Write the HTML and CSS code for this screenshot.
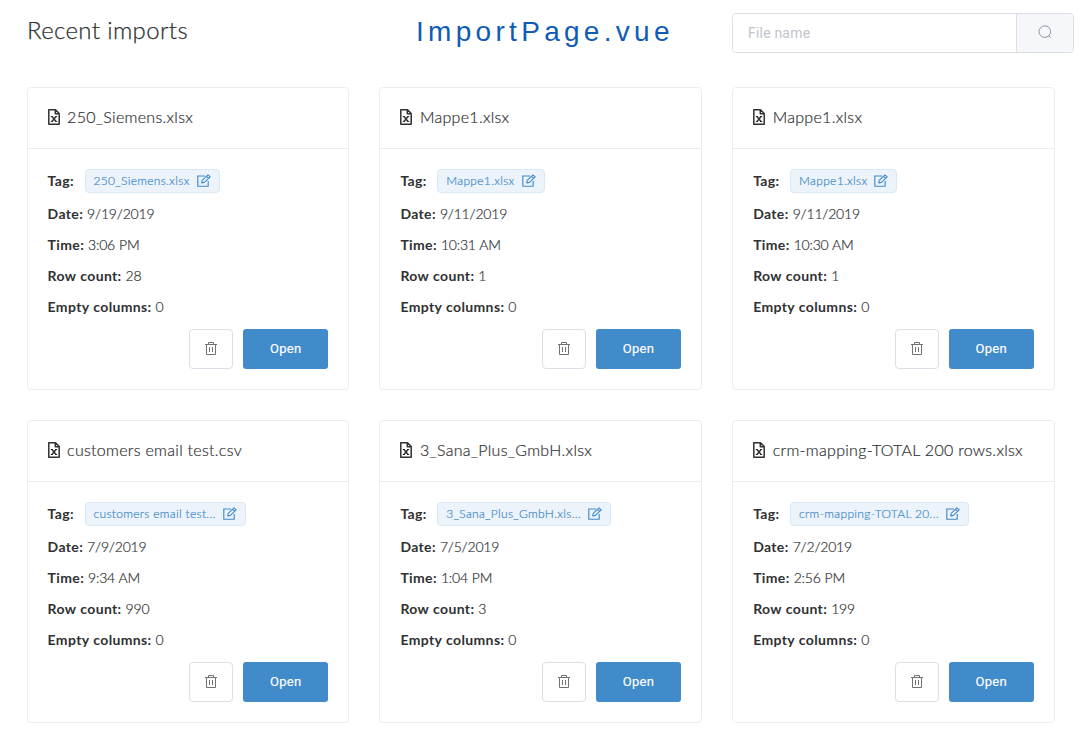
FILE: index.html
```html
<!DOCTYPE html>
<html lang="en">
<head>
<meta charset="utf-8">
<title>Recent imports</title>
<link rel="stylesheet" href="styles.css">
</head>
<body>
<svg class="sprite" aria-hidden="true">
  <symbol id="file" viewBox="0 0 12 16"><path d="M.8.8h6.7l3.7 3.7v10.7H.8zM7.3.8v4h3.9" fill="none" stroke="currentColor" stroke-width="1.5" stroke-linejoin="round"/><path d="M4 7.5l4 5M8 7.5l-4 5" fill="none" stroke="currentColor" stroke-width="1.5"/><path d="M2.8 7.5h2.2M7 7.5h2.2M2.8 12.5h2.2M7 12.5h2.2" stroke="currentColor"/></symbol>
  <symbol id="edit" viewBox="0 0 14 13"><path d="M8 2H.8v10.2h10.4V7" fill="none" stroke="currentColor" stroke-width="1.15"/><path d="M4.7 8.9l.5-2.6L11 .8l2.2 2-5.8 5.6zM9.4 2.2l2.2 2.1" fill="none" stroke="currentColor" stroke-width="1.1" stroke-linejoin="round"/></symbol>
  <symbol id="trash" viewBox="0 0 12 13"><path d="M0 2.5h12M3.5 2.5v-2h5v2M1.5 2.5v10h9v-10M4.5 5v5M7.5 5v5" fill="none" stroke="currentColor"/></symbol>
  <symbol id="search" viewBox="0 0 14 14"><circle cx="6.8" cy="6.6" r="5.8" fill="none" stroke="currentColor"/><path d="M10.6 10.6l2.2 2" stroke="currentColor"/></symbol>
</svg>
<header class="topbar">
  <h1 class="heading">Recent imports</h1>
  <div class="component">ImportPage.vue</div>
  <div class="search">
    <input class="search-input" type="text" placeholder="File name">
    <button class="search-button" aria-label="Search"><svg class="icon-search"><use href="#search"/></svg></button>
  </div>
</header>
<main class="cards">
  <article class="card">
    <h2 class="card-title"><svg class="icon-file"><use href="#file"/></svg><span class="file-name">250_Siemens.xlsx</span></h2>
    <div class="card-body">
      <div class="row tag-row"><b>Tag:</b><span class="tag"><span class="tag-text">250_Siemens.xlsx</span><svg class="icon-edit"><use href="#edit"/></svg></span></div>
      <div class="row"><b>Date:</b> 9/19/2019</div>
      <div class="row"><b>Time:</b> 3:06 PM</div>
      <div class="row"><b>Row count:</b> 28</div>
      <div class="row"><b>Empty columns:</b> 0</div>
      <div class="actions"><button class="delete" aria-label="Delete"><svg class="icon-trash"><use href="#trash"/></svg></button><button class="open">Open</button></div>
    </div>
  </article>
  <article class="card">
    <h2 class="card-title"><svg class="icon-file"><use href="#file"/></svg><span class="file-name">Mappe1.xlsx</span></h2>
    <div class="card-body">
      <div class="row tag-row"><b>Tag:</b><span class="tag"><span class="tag-text">Mappe1.xlsx</span><svg class="icon-edit"><use href="#edit"/></svg></span></div>
      <div class="row"><b>Date:</b> 9/11/2019</div>
      <div class="row"><b>Time:</b> 10:31 AM</div>
      <div class="row"><b>Row count:</b> 1</div>
      <div class="row"><b>Empty columns:</b> 0</div>
      <div class="actions"><button class="delete" aria-label="Delete"><svg class="icon-trash"><use href="#trash"/></svg></button><button class="open">Open</button></div>
    </div>
  </article>
  <article class="card">
    <h2 class="card-title"><svg class="icon-file"><use href="#file"/></svg><span class="file-name">Mappe1.xlsx</span></h2>
    <div class="card-body">
      <div class="row tag-row"><b>Tag:</b><span class="tag"><span class="tag-text">Mappe1.xlsx</span><svg class="icon-edit"><use href="#edit"/></svg></span></div>
      <div class="row"><b>Date:</b> 9/11/2019</div>
      <div class="row"><b>Time:</b> 10:30 AM</div>
      <div class="row"><b>Row count:</b> 1</div>
      <div class="row"><b>Empty columns:</b> 0</div>
      <div class="actions"><button class="delete" aria-label="Delete"><svg class="icon-trash"><use href="#trash"/></svg></button><button class="open">Open</button></div>
    </div>
  </article>
  <article class="card">
    <h2 class="card-title"><svg class="icon-file"><use href="#file"/></svg><span class="file-name">customers email test.csv</span></h2>
    <div class="card-body">
      <div class="row tag-row"><b>Tag:</b><span class="tag"><span class="tag-text">customers email test...</span><svg class="icon-edit"><use href="#edit"/></svg></span></div>
      <div class="row"><b>Date:</b> 7/9/2019</div>
      <div class="row"><b>Time:</b> 9:34 AM</div>
      <div class="row"><b>Row count:</b> 990</div>
      <div class="row"><b>Empty columns:</b> 0</div>
      <div class="actions"><button class="delete" aria-label="Delete"><svg class="icon-trash"><use href="#trash"/></svg></button><button class="open">Open</button></div>
    </div>
  </article>
  <article class="card">
    <h2 class="card-title"><svg class="icon-file"><use href="#file"/></svg><span class="file-name">3_Sana_Plus_GmbH.xlsx</span></h2>
    <div class="card-body">
      <div class="row tag-row"><b>Tag:</b><span class="tag"><span class="tag-text">3_Sana_Plus_GmbH.xls...</span><svg class="icon-edit"><use href="#edit"/></svg></span></div>
      <div class="row"><b>Date:</b> 7/5/2019</div>
      <div class="row"><b>Time:</b> 1:04 PM</div>
      <div class="row"><b>Row count:</b> 3</div>
      <div class="row"><b>Empty columns:</b> 0</div>
      <div class="actions"><button class="delete" aria-label="Delete"><svg class="icon-trash"><use href="#trash"/></svg></button><button class="open">Open</button></div>
    </div>
  </article>
  <article class="card">
    <h2 class="card-title"><svg class="icon-file"><use href="#file"/></svg><span class="file-name">crm-mapping-TOTAL 200 rows.xlsx</span></h2>
    <div class="card-body">
      <div class="row tag-row"><b>Tag:</b><span class="tag"><span class="tag-text">crm-mapping-TOTAL 20...</span><svg class="icon-edit"><use href="#edit"/></svg></span></div>
      <div class="row"><b>Date:</b> 7/2/2019</div>
      <div class="row"><b>Time:</b> 2:56 PM</div>
      <div class="row"><b>Row count:</b> 199</div>
      <div class="row"><b>Empty columns:</b> 0</div>
      <div class="actions"><button class="delete" aria-label="Delete"><svg class="icon-trash"><use href="#trash"/></svg></button><button class="open">Open</button></div>
    </div>
  </article>
</main>
</body>
</html>
```

FILE: styles.css
```css
* { box-sizing: border-box; }
body { margin: 0; height: 754px; overflow: hidden; background: #fff; color: #303133; font-family: Lato, "Liberation Sans", sans-serif; }
.sprite { display: none; }
svg { display: block; flex: none; }
.topbar { display: grid; grid-template-columns: 389px 316px 342px; height: 87px; padding: 13px 0 0 27px; align-items: start; }
.heading { margin: 0; font-size: 24px; line-height: 33px; font-weight: 300; letter-spacing: .36px; -webkit-text-stroke: .25px currentColor; }
.component { color: #0f5bb5; font-family: "Liberation Sans", Arial, sans-serif; font-size: 28px; line-height: 38px; letter-spacing: 4.3px; }
.search { display: flex; height: 40px; border: 1px solid #dcdfe6; border-radius: 4px; overflow: hidden; }
.search-input { flex: 1; min-width: 0; border: 0; padding: 0 15px; background: #fff; font-family: Roboto, sans-serif; font-size: 14px; letter-spacing: .2px; outline: 0; }
.search-input::placeholder { color: #c0c4cc; opacity: 1; }
.search-button { width: 57px; border: 0; border-left: 1px solid #dcdfe6; background: #f5f7fa; color: #909399; padding: 0 0 2px; display: flex; align-items: center; justify-content: center; }
.icon-search { width: 14px; height: 14px; }
.cards { display: grid; grid-template-columns: repeat(3, 322.6px); column-gap: 30.2px; row-gap: 30px; padding-left: 26.6px; }
.card { height: 303px; border: 1px solid #ebeef0; border-radius: 4px; background: #fff; }
.card-title { display: flex; align-items: center; gap: 7.5px; height: 61px; margin: 0; padding: 0 20px 2px; border-bottom: 1px solid #ebeef0; font-size: 16px; font-weight: 300; letter-spacing: .29px; white-space: nowrap; -webkit-text-stroke: .2px currentColor; }
.file-name { padding-bottom: 2px; }
.icon-file { width: 12px; height: 16px; }
.card-body { padding: 15px 20px 20px; font-size: 14px; font-weight: 300; }
.row { height: 31px; line-height: 31px; white-space: nowrap; letter-spacing: -.2px; word-spacing: .4px; -webkit-text-stroke: .2px currentColor; }
.row b { font-weight: 700; letter-spacing: .36px; -webkit-text-stroke: 0; }
.tag-row { display: flex; align-items: center; gap: 10.5px; height: 34px; }
.tag-row b { padding-bottom: 2px; }
.tag { display: flex; align-items: center; gap: 7px; height: 24px; padding: 0 8px; border: 1px solid #d9e8f4; border-radius: 4px; background: #ecf3fa; color: #428bca; font-size: 12px; letter-spacing: .32px; word-spacing: 0; }
.tag-text { padding-bottom: 2px; }
.icon-edit { width: 14px; height: 13px; margin-bottom: 1px; }
.actions { display: flex; justify-content: flex-end; gap: 10px; margin-top: 7px; }
.delete { display: flex; align-items: center; justify-content: center; width: 44px; height: 40px; padding: 0 0 1px; border: 1px solid #dcdfe6; border-radius: 4px; background: #fff; color: #707276; }
.icon-trash { width: 12px; height: 13px; }
.open { width: 85px; height: 40px; padding: 0 0 1px; border: 0; border-radius: 3px; background: #428bca; color: #fff; font: 400 13px Roboto, sans-serif; letter-spacing: .3px; -webkit-text-stroke: .15px currentColor; }
```
